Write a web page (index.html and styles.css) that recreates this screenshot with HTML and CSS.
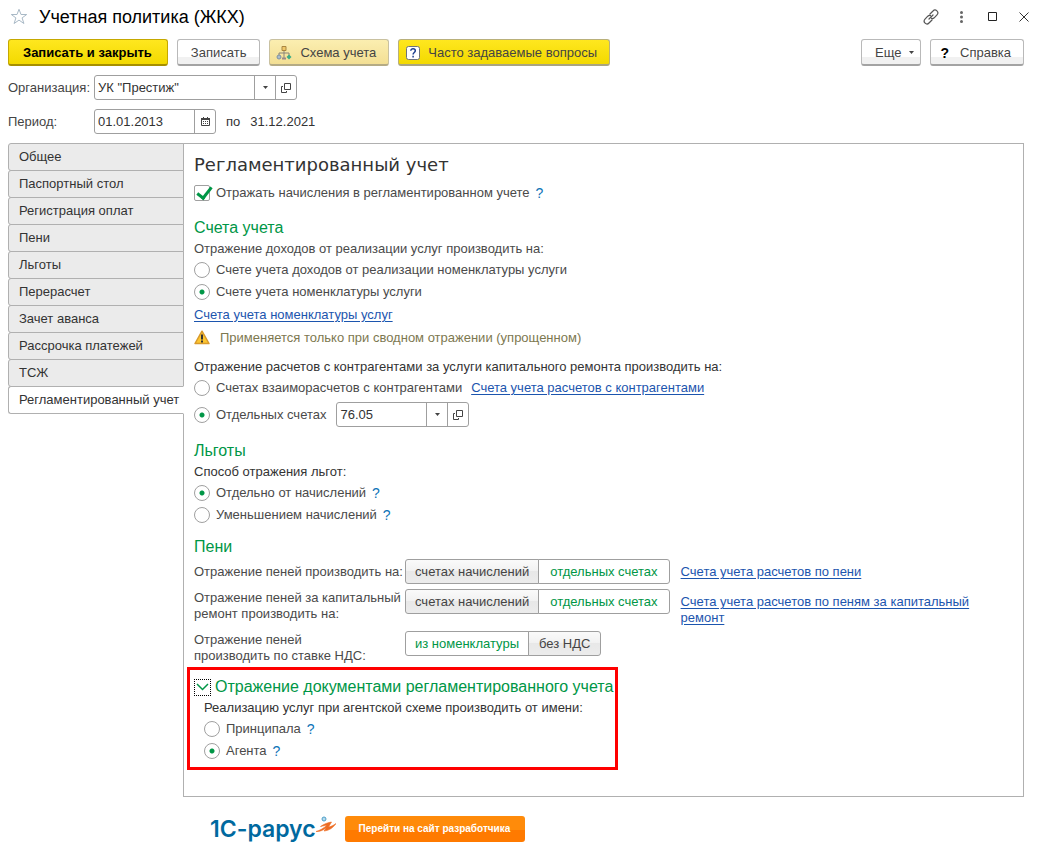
FILE: index.html
```html
<!DOCTYPE html>
<html lang="ru">
<head>
<meta charset="utf-8">
<title>Учетная политика (ЖКХ)</title>
<meta name="viewport" content="width=device-width, initial-scale=1">
<link rel="stylesheet" href="styles.css">
</head>
<body>
<svg class="sprite" aria-hidden="true">
  <symbol id="arrow" viewBox="0 0 5 3"><path d="M0 0h5L2.5 3z" fill="#444"/></symbol>
  <symbol id="open" viewBox="0 0 10 10"><path d="M3.500 .5h6v6h-6zM2 3.500H.5v6h5V8" fill="none" stroke="#444"/></symbol>
</svg>
<header class="titlebar">
  <button class="icon-btn" type="button" aria-label="В избранное"><svg width="18" height="17" viewBox="0 0 18 17"><path d="M9 1.300l2 5.200h5.700l-4.600 3.400 1.800 5.600L9 12.100l-4.900 3.400 1.800-5.600L1.300 6.500H7z" fill="#fff" stroke="#a9b9c6"/></svg></button>
  <h1 class="title">Учетная политика (ЖКХ)</h1>
  <button class="icon-btn" type="button" aria-label="Ссылка"><svg width="16" height="16" viewBox="0 0 16 16" fill="none" stroke="#555" stroke-width="1.200" stroke-linecap="round"><path d="M7 5l3-3a2.600 2.600 0 0 1 4 3.800L11.200 8.800a2.600 2.600 0 0 1-2.700.6M9 11l-3 3a2.600 2.600 0 0 1-4-3.800L4.800 7.200a2.600 2.600 0 0 1 2.700-.6M6 10l4-4"/></svg></button>
  <button class="icon-btn" type="button" aria-label="Меню"><svg width="3" height="12" viewBox="0 0 3 12" fill="#666"><circle cx="1.500" cy="1.500" r="1.500"/><circle cx="1.500" cy="6" r="1.500"/><circle cx="1.500" cy="10.500" r="1.500"/></svg></button>
  <button class="icon-btn" type="button" aria-label="Развернуть"><svg width="9" height="9" viewBox="0 0 9 9"><path d="M.5.5h8v8h-8z" fill="none" stroke="#222"/></svg></button>
  <button class="icon-btn" type="button" aria-label="Закрыть"><svg width="10" height="10" viewBox="0 0 10 10"><path d="M.5.5l9 9m0-9l-9 9" stroke="#333"/></svg></button>
</header>

<div class="toolbar">
  <button class="btn btn-primary" type="button">Записать и закрыть</button>
  <button class="btn" type="button">Записать</button>
  <button class="btn btn-soft" type="button"><svg width="16" height="16" viewBox="0 0 16 16"><path d="M8 5v8M3 11V8h10v3" fill="none" stroke="#8a8478"/><path d="M6 1.500h4v4H6z" fill="#f0c868" stroke="#a98640"/><circle cx="3" cy="12" r="2" fill="#a9bccb" stroke="#7e92a3"/><path d="M6 12.500h4v2H6z" fill="#9b8a86"/><path d="M13 9.500l2.500 2.500-2.500 2.500-2.500-2.500z" fill="#3bab86"/></svg>Схема учета</button>
  <button class="btn btn-yellow" type="button"><svg width="14" height="14" viewBox="0 0 14 14"><rect x=".5" y=".5" width="13" height="13" rx="2" fill="#fff" stroke="#6d727c"/><path d="M4.800 4.800c0-2.800 4.500-2.700 4.500 0 0 1.800-2.200 1.700-2.200 3.700M7.100 9.800v1.700" fill="none" stroke="#1d3f8f" stroke-width="1.500"/></svg>Часто задаваемые вопросы</button>
  <span class="spacer"></span>
  <button class="btn btn-more" type="button">Еще<svg width="5" height="3"><use href="#arrow"/></svg></button>
  <button class="btn btn-help" type="button"><b>?</b>Справка</button>
</div>

<div class="field-row">
  <label class="field-label" for="org">Организация:</label>
  <div class="combo"><input class="org-input" id="org" type="text" value="УК &quot;Престиж&quot;"><button type="button" aria-label="Выбрать"><svg width="5" height="3"><use href="#arrow"/></svg></button><button type="button" aria-label="Открыть"><svg width="10" height="10"><use href="#open"/></svg></button></div>
</div>
<div class="field-row">
  <label class="field-label" for="from">Период:</label>
  <div class="combo"><input class="date-input" id="from" type="text" value="01.01.2013"><button type="button" aria-label="Календарь"><svg width="9" height="9" viewBox="0 0 9 9"><path d="M.5 1.500h8v7h-8z" fill="none" stroke="#444"/><path d="M0 1h9v2H0zM2 0h1v1H2zM6 0h1v1H6zM2 4h1v1H2zM4 4h1v1H4zM6 4h1v1H6zM2 6h1v1H2zM4 6h1v1H4zM6 6h1v1H6z" fill="#444"/></svg></button></div>
  <span class="period-end"><span>по</span><span>31.12.2021</span></span>
</div>

<main class="workspace">
  <nav class="tabs" role="tablist">
    <button class="tab" role="tab" type="button">Общее</button>
    <button class="tab" role="tab" type="button">Паспортный стол</button>
    <button class="tab" role="tab" type="button">Регистрация оплат</button>
    <button class="tab" role="tab" type="button">Пени</button>
    <button class="tab" role="tab" type="button">Льготы</button>
    <button class="tab" role="tab" type="button">Перерасчет</button>
    <button class="tab" role="tab" type="button">Зачет аванса</button>
    <button class="tab" role="tab" type="button">Рассрочка платежей</button>
    <button class="tab" role="tab" type="button">ТСЖ</button>
    <button class="tab tab-active" role="tab" type="button" aria-selected="true">Регламентированный учет</button>
  </nav>
  <div class="panel">
    <h2 class="page-heading">Регламентированный учет</h2>
    <div class="option"><input class="check" id="reflect" type="checkbox" checked><label for="reflect">Отражать начисления в регламентированном учете</label><a class="hint" href="#">?</a></div>

    <section class="section">
      <h3 class="heading">Счета учета</h3>
      <p class="caption muted">Отражение доходов от реализации услуг производить на:</p>
      <div class="option"><input class="radio" id="inc1" name="income" type="radio"><label for="inc1">Счете учета доходов от реализации номенклатуры услуги</label></div>
      <div class="option"><input class="radio" id="inc2" name="income" type="radio" checked><label for="inc2">Счете учета номенклатуры услуги</label></div>
      <div class="line"><a class="link" href="#">Счета учета номенклатуры услуг</a></div>
      <p class="line warning"><svg width="16" height="15" viewBox="0 0 16 15"><path d="M8 1.200L15 13.500H1z" fill="#fcc630" stroke="#d99a2b" stroke-width="1.500" stroke-linejoin="round"/><path d="M8 4.500v5M8 10.500v2" stroke="#333" stroke-width="2"/></svg>Применяется только при сводном отражении (упрощенном)</p>
      <p class="caption caption-gap">Отражение расчетов с контрагентами за услуги капитального ремонта производить на:</p>
      <div class="option"><input class="radio" id="cap1" name="capital" type="radio"><label for="cap1">Счетах взаиморасчетов с контрагентами</label><a class="link link-after" href="#">Счета учета расчетов с контрагентами</a></div>
      <div class="option option-field"><input class="radio" id="cap2" name="capital" type="radio" checked><label for="cap2">Отдельных счетах</label>
        <div class="combo combo-after"><input class="account-input" type="text" value="76.05" aria-label="Счет"><button type="button" aria-label="Выбрать"><svg width="5" height="3"><use href="#arrow"/></svg></button><button type="button" aria-label="Открыть"><svg width="10" height="10"><use href="#open"/></svg></button></div></div>
    </section>

    <section class="section">
      <h3 class="heading">Льготы</h3>
      <p class="caption">Способ отражения льгот:</p>
      <div class="option"><input class="radio" id="ben1" name="benefit" type="radio" checked><label for="ben1">Отдельно от начислений</label><a class="hint" href="#">?</a></div>
      <div class="option"><input class="radio" id="ben2" name="benefit" type="radio"><label for="ben2">Уменьшением начислений</label><a class="hint" href="#">?</a></div>
    </section>

    <section class="section section-last">
      <h3 class="heading">Пени</h3>
      <div class="penalty-grid">
        <span class="penalty-label single" id="p1">Отражение пеней производить на:</span>
        <div class="switch" role="group" aria-labelledby="p1"><button type="button">счетах начислений</button><button class="on" type="button" aria-pressed="true">отдельных счетах</button></div>
        <a class="link" href="#">Счета учета расчетов по пени</a>
        <span class="penalty-label" id="p2">Отражение пеней за капитальный<br>ремонт производить на:</span>
        <div class="switch" role="group" aria-labelledby="p2"><button type="button">счетах начислений</button><button class="on" type="button" aria-pressed="true">отдельных счетах</button></div>
        <a class="link" href="#">Счета учета расчетов по пеням за капитальный ремонт</a>
        <span class="penalty-label" id="p3">Отражение пеней<br>производить по ставке НДС:</span>
        <div class="switch" role="group" aria-labelledby="p3"><button class="on" type="button" aria-pressed="true">из номенклатуры</button><button type="button">без НДС</button></div>
      </div>
    </section>

    <section class="highlight">
      <h3 class="heading heading-toggle"><button class="toggle" type="button" aria-label="Свернуть"><svg width="13" height="8" viewBox="0 0 13 8"><path d="M1 1l5.500 5.500L12 1" fill="none" stroke="#009646" stroke-width="1.500"/></svg></button>Отражение документами регламентированного учета</h3>
      <div class="nested">
        <p class="caption">Реализацию услуг при агентской схеме производить от имени:</p>
        <div class="option"><input class="radio" id="ag1" name="agent" type="radio"><label for="ag1">Принципала</label><a class="hint" href="#">?</a></div>
        <div class="option"><input class="radio" id="ag2" name="agent" type="radio" checked><label for="ag2">Агента</label><a class="hint" href="#">?</a></div>
      </div>
    </section>
  </div>
</main>

<footer class="footer">
  <span class="logo">1С-рарус<svg width="20" height="26" viewBox="0 0 20 26"><path d="M0 15.500C4 14.500 8 12 11 9L4.500 10.500C8 8 12 6.500 15.500 6L12.500 11C15 10.500 17.500 9.500 20 7.500C17 12 13 14.500 8 15L10.500 11.500C7.500 14 3.500 16 0 15.500z" fill="#ed6b22" stroke="#ed6b22" stroke-width=".6"/><circle cx="8" cy="3" r="2" fill="#b5dcef" stroke="#4f9fc8"/></svg></span>
  <a class="site-link" href="#">Перейти на сайт разработчика</a>
</footer>
</body>
</html>
```
FILE: styles.css
```css
* { box-sizing: border-box; }
body {
  margin: 0;
  padding: 0 14px 14px 8px;
  background: #fff;
  color: #333;
  font: 13px/16px "Liberation Sans", Arial, sans-serif;
}
h1, h2, h3, p { margin: 0; font-weight: 400; }
button, input { font: inherit; color: inherit; margin: 0; }
button { padding: 0; cursor: pointer; }
svg { flex: none; display: block; }
.sprite { position: absolute; width: 0; height: 0; }

.titlebar { display: flex; align-items: center; height: 33px; }
.title { flex: 1; padding-left: 10px; font-size: 18px; line-height: 24px; color: #000; }
.icon-btn { display: grid; place-items: center; min-width: 31px; height: 24px; border: 0; background: none; }
.icon-btn:first-child { min-width: 21px; }
.icon-btn:last-child { margin-right: -15px; }

.toolbar { display: flex; gap: 9px; margin: 6px 0 9px; }
.btn {
  display: flex; align-items: center; justify-content: center; gap: 8px;
  height: 27px; padding: 1px 13px 0;
  border: 1px solid #b9b9b9; border-bottom: 2px solid #a3a3a3; border-radius: 3px;
  background: linear-gradient(#fff 0 70%, #f1f1f1 70%);
  color: #444; white-space: nowrap;
}
.btn-primary { padding: 1px 15px 0 14px; border-color: #c5a800; border-bottom-color: #a68f00; background: linear-gradient(#ffe71f, #f3d900); color: #000; font-weight: 700; }
.btn-soft { padding: 1px 12px 0 6px; border-color: #c9c1a0; border-bottom-color: #b5ab84; background: linear-gradient(#fbeeb0, #f3df94); }
.btn-yellow { padding: 1px 12px 0 7px; border-color: #b9b07a; border-bottom-color: #a9a480; background: linear-gradient(#ffe71f, #f3d900); }
.btn-more { padding: 1px 6px 0 13px; }
.btn-help { padding: 1px 12px 0 9px; gap: 11px; }
.btn-help b { color: #000; font-size: 14px; }
.spacer { flex: 1; }

.field-row { display: flex; align-items: center; margin-bottom: 9px; }
.field-label { width: 86px; color: #444; }
.combo { display: flex; height: 25px; border: 1px solid #9f9f9f; border-radius: 3px; background: #fff; }
.combo input { min-width: 0; padding: 0 3px; border: 0; border-radius: 3px; background: none; outline: 0; }
.combo button { display: grid; place-items: center; width: 21px; border: 0; border-left: 1px solid #9f9f9f; background: none; }
.org-input { width: 159px; }
.date-input { width: 99px; }
.account-input { width: 89px; }
.period-end { display: flex; gap: 10px; padding-left: 10px; }

.workspace { display: flex; align-items: stretch; }
.tabs { display: flex; flex-direction: column; flex: none; width: 176px; margin-right: -1px; z-index: 1; }
.tab {
  height: 28px; margin-bottom: -1px; padding: 0 0 0 10px;
  border: 1px solid #b0b0b0; border-radius: 3px 0 0 3px;
  background: #ebebeb; text-align: left; white-space: nowrap;
}
.tab-active { border-right-color: #fff; background: #fff; }
.panel { flex: 1; min-width: 0; padding: 9px 10px 26px; border: 1px solid #b0b0b0; }

.page-heading { margin-bottom: 5px; font: 18px/24px "DejaVu Sans", sans-serif; color: #333; }
.section { margin-bottom: 10px; }
.section-last { margin-bottom: 0; }
.option + .section { margin-top: 13px; }
.heading { font-size: 16px; line-height: 22px; color: #009646; }
.caption { line-height: 20px; }
.caption-gap { margin-top: 8px; }
.muted, .option label, .penalty-label { color: #4a4a4a; }
.option { display: flex; align-items: center; height: 22px; }
.option-field { height: 27px; margin: 2px 0 12px; }
.line { display: flex; align-items: center; height: 23px; }
.check, .radio { appearance: none; flex: none; width: 16px; height: 16px; margin: 0 6px 0 0; border: 1px solid #a0a0a0; background: #fff; }
.radio { border-radius: 50%; }
.radio:checked { background: radial-gradient(circle, #009646 0 2px, #fff 3px); }
.check { position: relative; border-radius: 2px; }
.check:checked::after {
  content: ""; position: absolute; left: 5px; top: -2px; width: 6px; height: 12px;
  border: solid #009646; border-width: 0 3px 3px 0; transform: rotate(38deg);
}
.hint { margin-left: 6px; color: #0d73b7; font-size: 14px; text-decoration: none; }
.link { color: #1c55ae; text-decoration: underline; text-underline-offset: 2px; }
.link-after { margin-left: 9px; }
.combo-after { margin-left: 10px; }
.warning { gap: 10px; color: #7d7850; }

.penalty-grid {
  display: grid; grid-template-columns: 205px auto minmax(0, 300px); justify-content: start;
  column-gap: 6px; row-gap: 4px; padding-top: 1px; align-items: start;
}
.penalty-grid .link { margin: 5px 0 0 5px; }
.penalty-label { padding-top: 1px; margin-bottom: 5px; white-space: nowrap; }
.penalty-label.single { padding-top: 5px; }
.penalty-label:last-of-type { margin-bottom: 3px; }
.switch { display: flex; }
.switch button {
  height: 25px; padding: 0 9px; border: 1px solid #9f9f9f; border-radius: 3px;
  background: linear-gradient(#fafafa 0, #f1f1f1 50%, #e8e8e8 50%, #ececec); color: #444; white-space: nowrap;
}
.switch button:first-child { border-radius: 3px 0 0 3px; }
.switch button:last-child { margin-left: -1px; padding: 0 10px; border-radius: 0 3px 3px 0; }
.switch button.on:last-child { padding: 0 11px; }
.switch .on { background: #fff; color: #009646; }

.highlight { width: fit-content; margin-left: -7px; padding: 6px 2px 5px 4px; border: 3px solid #f00; }
.heading-toggle { display: flex; align-items: center; gap: 4px; }
.toggle { display: grid; place-items: center; width: 17px; height: 17px; border: 1px dotted #000; background: #fff; }
.nested { padding-left: 10px; }

.footer { display: flex; align-items: center; gap: 9px; padding: 19px 0 0 202px; }
.logo { display: flex; align-items: center; color: #00699f; font: 600 23px/26px Inter, "Noto Sans", sans-serif; }
.site-link {
  padding: 0 15px 0 14px; border-radius: 3px; background: linear-gradient(#ff8b0a 0 55%, #ff7a00 55%);
  color: #fff; font-size: 10px; font-weight: 700; line-height: 26px; text-decoration: none; white-space: nowrap;
}
```
